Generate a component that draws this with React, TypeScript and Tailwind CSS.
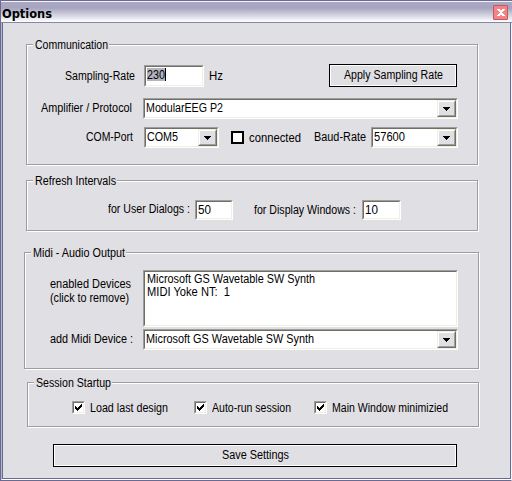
import { useLayoutEffect, useRef, useState, type ReactNode } from 'react';

/** Single-line label whose glyphs are condensed to the width of its box. */
function Label({ children, className }: { children: string; className: string }) {
  const box = useRef<HTMLSpanElement>(null);
  const text = useRef<HTMLSpanElement>(null);
  const [scale, setScale] = useState(1);
  useLayoutEffect(() => {
    if (box.current && text.current) {
      setScale(box.current.clientWidth / text.current.getBoundingClientRect().width);
    }
  }, []);
  return (
    <span ref={box} className={`block h-[14px] shrink-0 whitespace-pre leading-[14px] ${className}`}>
      <span ref={text} className="inline-block origin-left" style={{ transform: `scaleX(${scale})` }}>
        {children}
      </span>
    </span>
  );
}

function Group({ title, titleClass, className, children }: { title: string; titleClass: string; className: string; children: ReactNode }) {
  return (
    <section className={`flex shrink-0 flex-col border border-[#9d9da1] shadow-[1px_1px_0_#fff,inset_1px_1px_0_#fff] ${className}`}>
      <div className="-mt-[7px] ml-[6px] flex h-[14px] w-fit shrink-0 bg-[#e0dfe3] pl-[2px] pr-px">
        <Label className={titleClass}>{title}</Label>
      </div>
      {children}
    </section>
  );
}

function Sunken({ className, children }: { className: string; children?: ReactNode }) {
  return (
    <div className={`shrink-0 border border-b-white border-l-[#9d9da1] border-r-white border-t-[#9d9da1] ${className}`}>
      <div className="flex h-full w-full border border-b-[#f1efe2] border-l-[#716f64] border-r-[#f1efe2] border-t-[#716f64] bg-white">
        {children}
      </div>
    </div>
  );
}

function Combo({ className, children }: { className: string; children: ReactNode }) {
  return (
    <Sunken className={className}>
      {children}
      <button className="ml-auto flex h-full w-[19px] shrink-0 border border-b-[#716f64] border-l-[#f1efe2] border-r-[#716f64] border-t-[#f1efe2] bg-[#e0dfe3]">
        <span className="flex h-full w-full items-center justify-center border border-b-[#9d9da1] border-l-white border-r-[#9d9da1] border-t-white">
          <svg width="7" height="4" shapeRendering="crispEdges" aria-hidden="true">
            <path d="M0 0h7v1h-1v1h-1v1h-1v1h-1v-1h-1v-1h-1v-1h-1z" />
          </svg>
        </span>
      </button>
    </Sunken>
  );
}

function Checked({ className }: { className: string }) {
  return (
    <Sunken className={`h-[13px] w-[13px] ${className}`}>
      <svg width="9" height="9" shapeRendering="crispEdges" aria-hidden="true">
        <path d="M1 3h1v1h1v1h1v-1h1v-1h1v-1h1v-1h1v3h-1v1h-1v1h-1v1h-1v1h-1v-1h-1v-1h-1z" />
      </svg>
    </Sunken>
  );
}

export default function App() {
  return (
    <main className="flex h-[481px] w-[512px] flex-col overflow-hidden bg-[#e0dfe3] font-['Liberation_Sans',sans-serif] text-[12px] text-black">
      <header className="flex h-[23px] shrink-0 border-b border-l border-t border-b-[#8686a5] border-l-[#686a92] border-t-[#686a92] bg-[linear-gradient(#f4f4fa_0px,#f4f4fa_1px,#aaa8c2_1px,#a6a4c0_7px,#b9b8ce_10px,#d8d8e4_15px,#f8f8fc_20px,#ffffff_21px)]">
        <Label className="ml-px mt-[6px] w-[50px] font-['DejaVu_Sans_Condensed','DejaVu_Sans',sans-serif] font-bold">Options</Label>
        <button className="ml-auto mr-[4px] mt-[4px] flex h-[15px] w-[15px] items-center justify-center rounded-[1px] border border-[#b85d62] bg-[#f58284]">
          <svg width="8" height="7" viewBox="0 0 8 7" shapeRendering="crispEdges" aria-hidden="true">
            <path fill="#fff" d="M0 0h3v1h2v-1h3v1h-1v1h-1v1h-1v1h1v1h1v1h1v1h-3v-1h-2v1h-3v-1h1v-1h1v-1h1v-1h-1v-1h-1v-1h-1z" />
          </svg>
        </button>
      </header>

      <div className="flex h-[458px] border-b border-l border-r border-b-[#686a92] border-l-[#686a92] border-r-[#f4f4fa]">
        <div className="flex h-[457px] w-[510px] flex-col border-b border-l border-b-white border-l-[#b6b5cb]">
          <div className="flex h-[456px] w-[509px] flex-col border-b border-l border-r border-[#686a92]">

            <Group title="Communication" titleClass="w-[73px]" className="ml-[23px] mt-[21px] h-[121px] w-[452px]">
              <div className="mt-[12px] flex h-[24px] shrink-0">
                <Label className="ml-[38px] mt-[5px] w-[70px]">Sampling-Rate</Label>
                <Sunken className="ml-[9px] mt-px h-[22px] w-[60px]">
                  <div className="ml-px mt-px h-[13px] border-r border-black bg-[#b2b4bf]">
                    <Label className="w-[18px]">230</Label>
                  </div>
                </Sunken>
                <Label className="ml-[5px] mt-[5px] w-[14px]">Hz</Label>
                <button className="ml-[106px] flex h-[23px] w-[128px] shrink-0 justify-center border border-black shadow-[inset_1px_1px_0_#fff,inset_-1px_-1px_0_#fff]">
                  <Label className="mt-[3px] w-[99px]">Apply Sampling Rate</Label>
                </button>
              </div>
              <div className="mt-[10px] flex h-[21px] shrink-0">
                <Label className="ml-[14px] mt-[3px] w-[91px]">Amplifier / Protocol</Label>
                <Combo className="ml-[11px] h-[21px] w-[315px]">
                  <Label className="ml-px mt-px w-[77px]">ModularEEG P2</Label>
                </Combo>
              </div>
              <div className="mt-[8px] flex h-[21px] shrink-0">
                <Label className="ml-[59px] mt-[3px] w-[47px]">COM-Port</Label>
                <Combo className="ml-[11px] h-[21px] w-[75px]">
                  <Label className="ml-px mt-px w-[31px]">COM5</Label>
                </Combo>
                <span className="ml-[12px] mt-[4px] h-[13px] w-[13px] shrink-0 border-2 border-black bg-white" />
                <Label className="ml-[5px] mt-[4px] w-[52px]">connected</Label>
                <Label className="ml-[13px] mt-[3px] w-[52px]">Baud-Rate</Label>
                <Combo className="ml-[5px] h-[21px] w-[87px]">
                  <Label className="ml-px mt-px w-[31px]">57600</Label>
                </Combo>
              </div>
            </Group>

            <Group title="Refresh Intervals" titleClass="w-[81px]" className="ml-[23px] mt-[15px] h-[51px] w-[452px]">
              <div className="mt-[12px] flex h-[20px] shrink-0">
                <Label className="ml-[81px] mt-[2px] w-[82px]">for User Dialogs :</Label>
                <Sunken className="ml-[5px] h-[20px] w-[38px]">
                  <Label className="ml-px mt-px w-[13px]">50</Label>
                </Sunken>
                <Label className="ml-[21px] mt-[3px] w-[102px]">for Display Windows :</Label>
                <Sunken className="ml-[6px] h-[20px] w-[39px]">
                  <Label className="ml-px mt-px w-[13px]">10</Label>
                </Sunken>
              </div>
            </Group>

            <Group title="Midi - Audio Output" titleClass="w-[92px]" className="ml-[21px] mt-[21px] h-[117px] w-[455px]">
              <div className="mt-[10px] flex h-[57px] shrink-0">
                <div className="ml-[25px] mt-[7px] w-[81px]">
                  <Label className="w-[81px]">enabled Devices</Label>
                  <Label className="w-[79px]">(click to remove)</Label>
                </div>
                <Sunken className="ml-[12px] h-[57px] w-[315px]">
                  <div className="ml-[2px]">
                    <Label className="w-[168px]">Microsoft GS Wavetable SW Synth</Label>
                    <Label className="-mt-px w-[83px]">MIDI Yoke NT:  1</Label>
                  </div>
                </Sunken>
              </div>
              <div className="mt-[2px] flex h-[21px] shrink-0">
                <Label className="ml-[25px] mt-[3px] w-[83px]">add Midi Device :</Label>
                <Combo className="ml-[10px] h-[21px] w-[315px]">
                  <Label className="ml-px mt-px w-[168px]">Microsoft GS Wavetable SW Synth</Label>
                </Combo>
              </div>
            </Group>

            <Group title="Session Startup" titleClass="w-[75px]" className="ml-[24px] mt-[13px] h-[45px] w-[452px]">
              <div className="mt-[11px] flex h-[14px] shrink-0">
                <Checked className="ml-[44px]" />
                <Label className="ml-[5px] w-[78px]">Load last design</Label>
                <Checked className="ml-[26px]" />
                <Label className="ml-[5px] w-[79px]">Auto-run session</Label>
                <Checked className="ml-[23px]" />
                <Label className="ml-[5px] w-[116px]">Main Window minimizied</Label>
              </div>
            </Group>

            <button className="ml-[50px] mt-[17px] flex h-[23px] w-[404px] shrink-0 justify-center border border-black shadow-[inset_1px_1px_0_#fff,inset_-1px_-1px_0_#fff]">
              <Label className="mt-[3px] w-[67px]">Save Settings</Label>
            </button>
          </div>
        </div>
      </div>
    </main>
  );
}
